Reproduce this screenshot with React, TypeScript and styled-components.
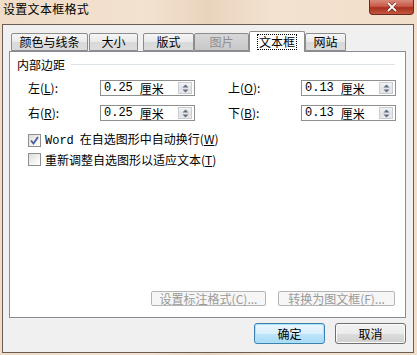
import React from 'react';
import styled, { createGlobalStyle } from 'styled-components';

const GlobalStyle = createGlobalStyle`
    html, body {
        margin: 0;
        padding: 0;
        background: #f2dfcb;
    }
    body {
        font-family: "Noto Sans CJK SC", "DejaVu Sans", sans-serif;
        font-size: 12px;
        color: #000;
    }
`;

const Window = styled.div`
    width: 417px;
    height: 355px;
    display: flex;
    flex-direction: column;
    background: linear-gradient(90deg, #f0dcc7 0%, #f3e2d0 35%, #e9d3bd 50%, #f3e2d0 65%, #f2dfca 100%);
    overflow: hidden;
`;

const TitleBar = styled.div`
    height: 24px;
    display: flex;
    justify-content: space-between;
    align-items: flex-start;
    padding: 0 3px 0 3px;
    box-sizing: border-box;
`;

const Title = styled.span`
    font-size: 12px;
    line-height: 17px;
    letter-spacing: 0.3px;
`;

const CloseButton = styled.div`
    width: 45px;
    height: 15px;
    box-sizing: border-box;
    border: 1px solid #6e2a20;
    border-top: none;
    border-radius: 0 0 4px 4px;
    background: linear-gradient(180deg, #d98a7a 0%, #c75b47 45%, #a8301e 55%, #c4573f 100%);
    display: flex;
    align-items: center;
    justify-content: center;
`;

const Dialog = styled.div`
    flex: 1;
    margin: 0 3px 2px 2px;
    border: 1px solid #6a5d52;
    background: #f0f0f0;
    display: flex;
    flex-direction: column;
    padding: 6px 7px 7px 6px;
    box-sizing: border-box;
`;

const Tabs = styled.div`
    display: flex;
    align-items: flex-end;
    padding-left: 2px;
    height: 20px;
    position: relative;
    z-index: 1;
`;

const Tab = styled.div<{ $w: number; $active?: boolean; $disabled?: boolean; $gap?: number }>`
    width: ${p => p.$w}px;
    margin-right: ${p => p.$gap ?? 0}px;
    height: ${p => (p.$active ? 21 : 18)}px;
    margin-bottom: ${p => (p.$active ? -1 : 0)}px;
    box-sizing: border-box;
    border: 1px solid #8c8c8c;
    border-bottom: ${p => (p.$active ? 'none' : '1px solid #8c8c8c')};
    border-radius: 2px 2px 0 0;
    background: ${p =>
        p.$active
            ? '#ffffff'
            : p.$disabled
            ? 'linear-gradient(180deg, #d8d8d8 0%, #c8c8c8 100%)'
            : 'linear-gradient(180deg, #f6f6f6 0%, #e9e9e9 50%, #d9d9d9 51%, #dcdcdc 100%)'};
    color: ${p => (p.$disabled ? '#8f8f8f' : '#000')};
    display: flex;
    align-items: center;
    justify-content: center;
    font-size: 12px;
    line-height: 14px;
    span {
        padding: 0 1px;
        outline: ${p => (p.$active ? '1px dotted #000' : 'none')};
    }
`;

const Panel = styled.div`
    height: 267px;
    background: #ffffff;
    border: 1px solid #898c95;
    box-sizing: border-box;
    display: flex;
    flex-direction: column;
    padding: 5px 10px 11px 7px;
`;

const SectionHeader = styled.div`
    display: flex;
    align-items: center;
    gap: 6px;
    height: 14px;
    &::after {
        content: '';
        flex: 1;
        height: 1px;
        background: #dce4e9;
    }
`;

const FieldGrid = styled.div`
    display: grid;
    grid-template-columns: 72px 95px 33px 73px 95px;
    row-gap: 9px;
    align-items: center;
    margin: 9px 0 0 11px;
`;

const Label = styled.span`
    font-size: 12px;
    line-height: 16px;
`;

const Spin = styled.div`
    height: 16px;
    box-sizing: border-box;
    border: 1px solid #8e8f8f;
    display: flex;
    align-items: center;
    justify-content: space-between;
    padding: 0 2px 0 3px;
    background: #fff;
    font-size: 12px;
`;

const SpinValue = styled.span`
    display: flex;
    align-items: center;
    gap: 7px;
`;

const SpinArrows = styled.div`
    width: 14px;
    height: 12px;
    box-sizing: border-box;
    border: 1px solid #c9cdd3;
    background: linear-gradient(180deg, #f3f3f3 0%, #e4e4e4 50%, #e8e8e8 100%);
    display: flex;
    align-items: center;
    justify-content: center;
`;

const Checks = styled.div`
    display: flex;
    flex-direction: column;
    gap: 5px;
    margin: 11px 0 0 11px;
`;

const CheckRow = styled.label`
    display: flex;
    align-items: center;
    gap: 4px;
    font-size: 12px;
    line-height: 13px;
`;

const Box = styled.span`
    width: 13px;
    height: 13px;
    box-sizing: border-box;
    border: 1px solid #8f8f8f;
    background: linear-gradient(135deg, #dcdcdc 0%, #f4f4f4 60%, #ffffff 100%);
    display: flex;
    align-items: center;
    justify-content: center;
`;

const Mono = styled.span<{ $space?: boolean }>`
    font-family: "Liberation Mono", "DejaVu Sans Mono", monospace;
    font-size: 12px;
    margin-right: ${p => (p.$space ? 6 : 0)}px;
`;

const PanelButtons = styled.div`
    margin-top: auto;
    display: flex;
    justify-content: flex-end;
    gap: 12px;
`;

const GhostButton = styled.div<{ $w: number }>`
    width: ${p => p.$w}px;
    height: 15px;
    box-sizing: border-box;
    border: 1px solid #b5b5b5;
    border-radius: 2px;
    background: #f6f6f6;
    color: #9a9a9a;
    display: flex;
    align-items: center;
    justify-content: center;
    font-size: 12px;
    line-height: 13px;
`;

const Footer = styled.div`
    display: flex;
    justify-content: flex-end;
    gap: 10px;
    margin-top: 5px;
`;

const Button = styled.div<{ $default?: boolean }>`
    width: 71px;
    height: 21px;
    box-sizing: border-box;
    border: 1px solid ${p => (p.$default ? '#3c7fb1' : '#707070')};
    border-radius: 3px;
    box-shadow: ${p => (p.$default ? 'inset 0 0 0 1px #a8e4f6' : 'inset 0 0 0 1px #fbfbfb')};
    background: ${p =>
        p.$default
            ? 'linear-gradient(180deg, #eaf6fd 0%, #d9f0fc 50%, #bee6fd 51%, #a7d9f5 100%)'
            : 'linear-gradient(180deg, #f2f2f2 0%, #ebebeb 50%, #dddddd 51%, #cfcfcf 100%)'};
    display: flex;
    align-items: center;
    justify-content: center;
    font-size: 12px;
`;

const SpinIcon = () => (
    <SpinArrows>
        <svg width="7" height="9" viewBox="0 0 7 9">
            <path d="M3.5 0.5 L6.5 3.5 H0.5 Z" fill="#5b6f86" />
            <path d="M3.5 8.5 L6.5 5.5 H0.5 Z" fill="#5b6f86" />
        </svg>
    </SpinArrows>
);

const fields = [
    { label: '左', key: 'L', value: '0.25' },
    { label: '上', key: 'O', value: '0.13' },
    { label: '右', key: 'R', value: '0.25' },
    { label: '下', key: 'B', value: '0.13' },
];

export default function App() {
    return (
        <>
            <GlobalStyle />
            <Window>
                <TitleBar>
                    <Title>设置文本框格式</Title>
                    <CloseButton>
                        <svg width="12" height="10" viewBox="0 0 12 10">
                            <path d="M2 1 L10 9 M10 1 L2 9" stroke="#5a1a10" strokeWidth="3" />
                            <path d="M2 1 L10 9 M10 1 L2 9" stroke="#ffffff" strokeWidth="1.8" />
                        </svg>
                    </CloseButton>
                </TitleBar>
                <Dialog>
                    <Tabs>
                        <Tab $w={77} $gap={1}><span>颜色与线条</span></Tab>
                        <Tab $w={49} $gap={5}><span>大小</span></Tab>
                        <Tab $w={51}><span>版式</span></Tab>
                        <Tab $w={55} $disabled><span>图片</span></Tab>
                        <Tab $w={56} $active><span>文本框</span></Tab>
                        <Tab $w={41}><span>网站</span></Tab>
                    </Tabs>
                    <Panel>
                        <SectionHeader>内部边距</SectionHeader>
                        <FieldGrid>
                            {fields.map((f, i) => (
                                <React.Fragment key={f.key}>
                                    <Label>
                                        {f.label}(<u>{f.key}</u>):
                                    </Label>
                                    <Spin>
                                        <SpinValue>
                                            <Mono>{f.value}</Mono>
                                            <span>厘米</span>
                                        </SpinValue>
                                        <SpinIcon />
                                    </Spin>
                                    {i % 2 === 0 && <span />}
                                </React.Fragment>
                            ))}
                        </FieldGrid>
                        <Checks>
                            <CheckRow>
                                <Box>
                                    <svg width="9" height="9" viewBox="0 0 9 9">
                                        <path d="M1 4.5 L3.5 7.5 L8 1" stroke="#4a5f97" strokeWidth="1.8" fill="none" />
                                    </svg>
                                </Box>
                                <span>
                                    <Mono $space>Word</Mono>在自选图形中自动换行(<u>W</u>)
                                </span>
                            </CheckRow>
                            <CheckRow>
                                <Box />
                                <span>
                                    重新调整自选图形以适应文本(<u>T</u>)
                                </span>
                            </CheckRow>
                        </Checks>
                        <PanelButtons>
                            <GhostButton $w={115}>设置标注格式(C)...</GhostButton>
                            <GhostButton $w={117}>转换为图文框(F)...</GhostButton>
                        </PanelButtons>
                    </Panel>
                    <Footer>
                        <Button $default>确定</Button>
                        <Button>取消</Button>
                    </Footer>
                </Dialog>
            </Window>
        </>
    );
}
